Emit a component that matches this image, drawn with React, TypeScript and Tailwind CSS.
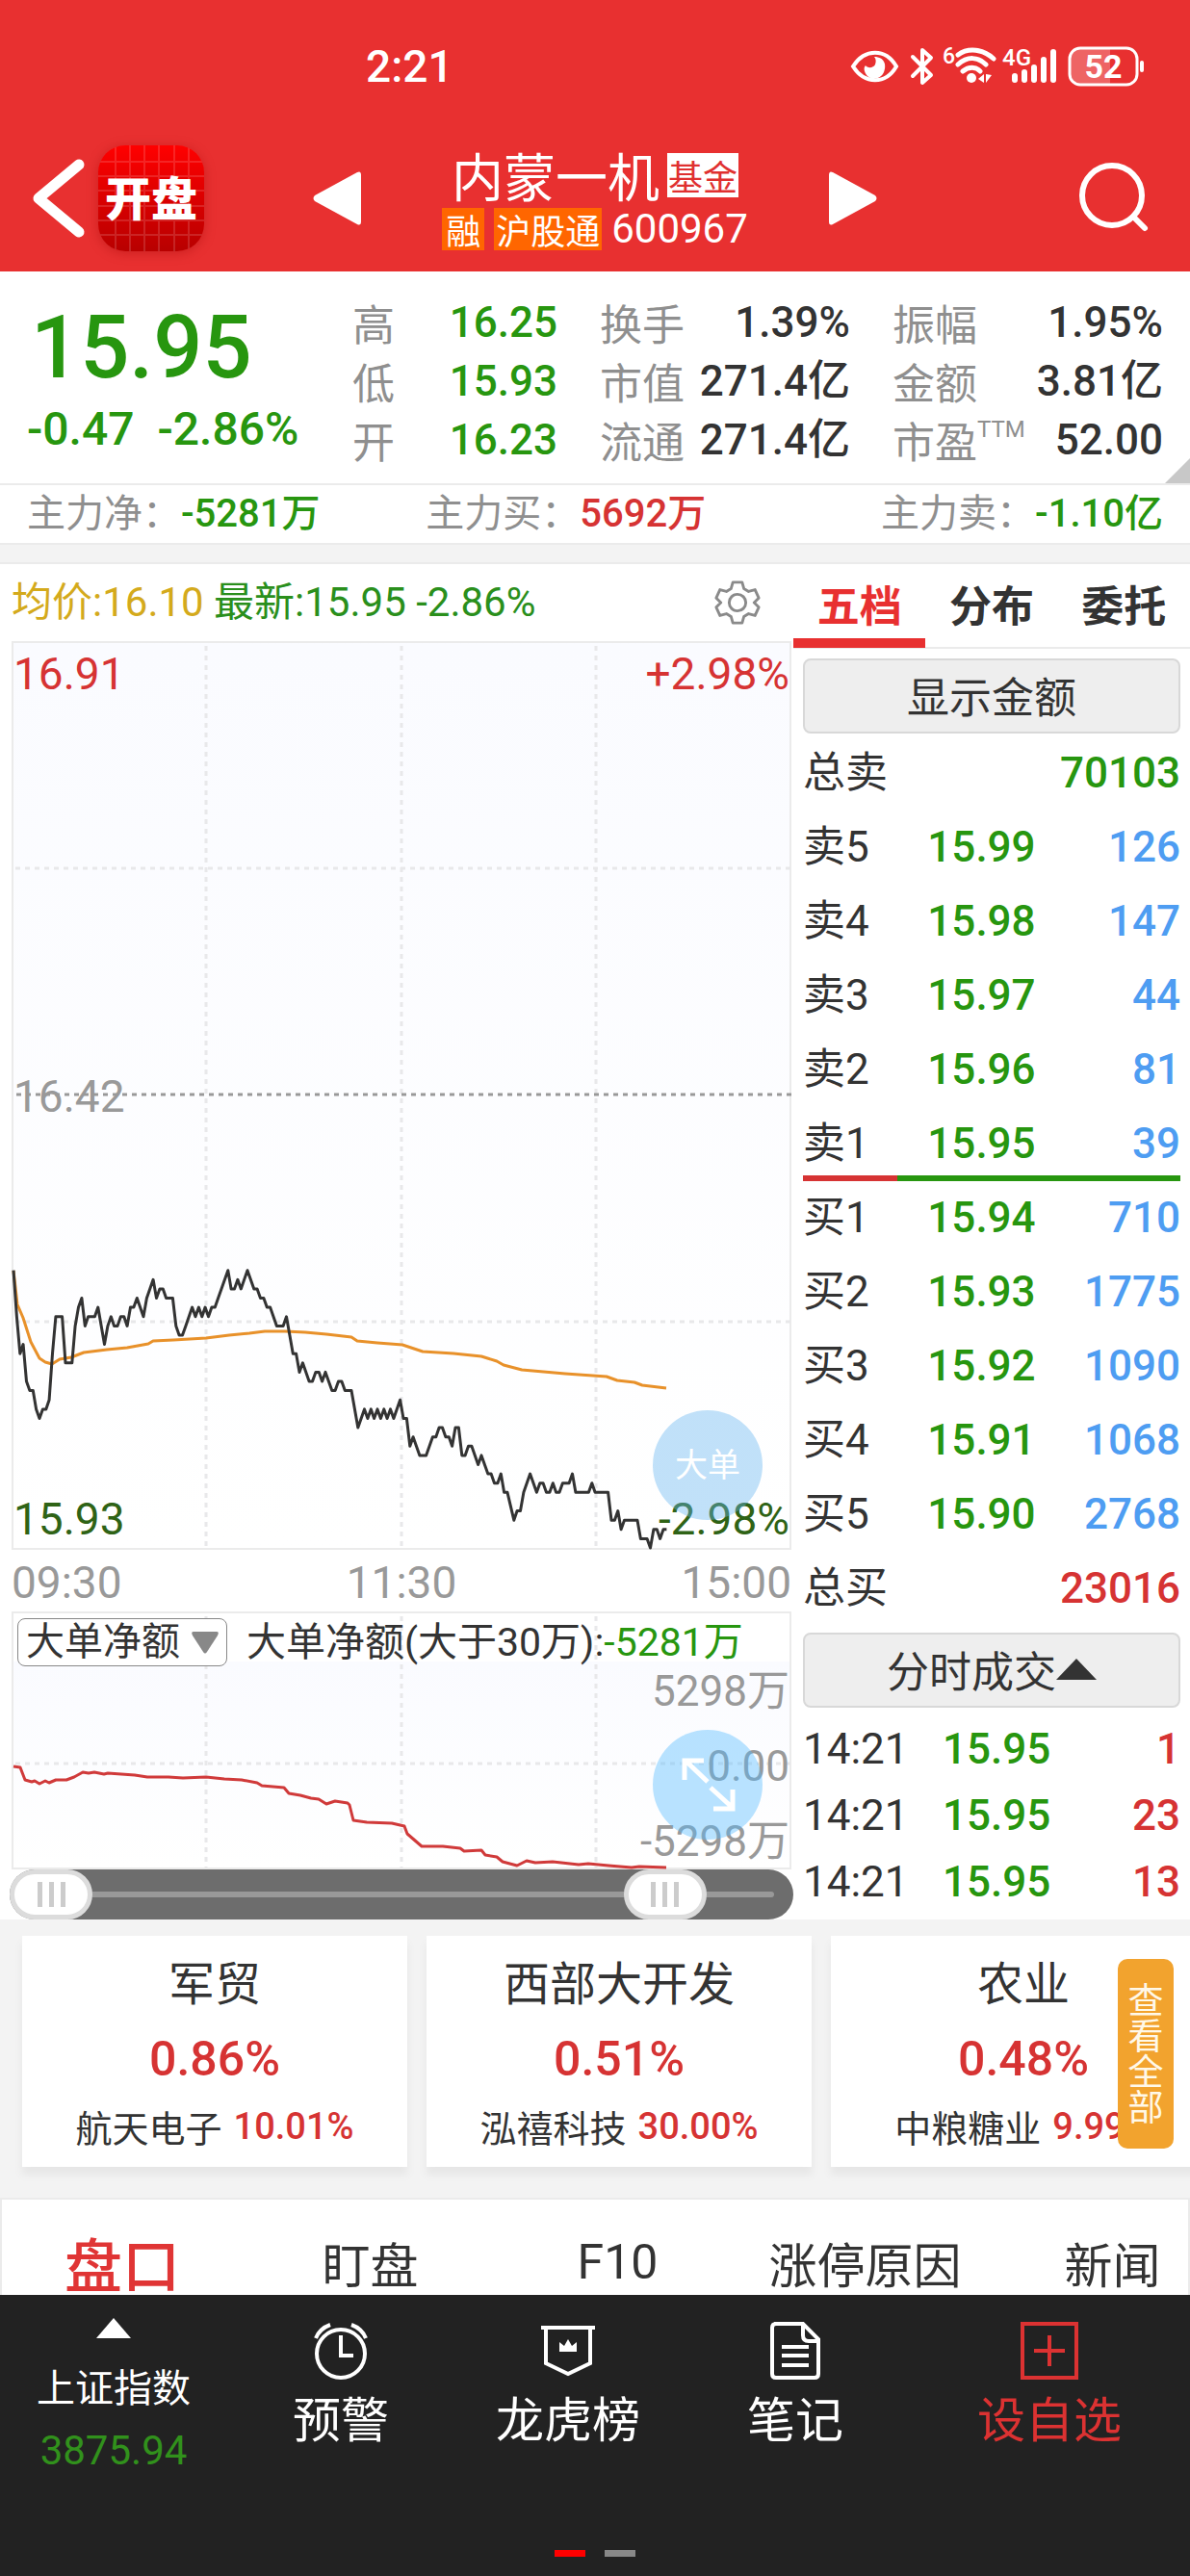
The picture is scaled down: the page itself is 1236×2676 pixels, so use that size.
import { useState, type ReactNode } from 'react';

const NUM = "font-['Roboto','Noto_Sans_CJK_SC',sans-serif]";

// [minute since open, price in cents above 15.90]
const PRICE: [number, number][] = [
  [0, 33], [1, 28], [2, 24], [3, 25], [4, 21], [5, 20], [6, 20], [7, 18], [8, 17], [9, 18], [10, 18], [11, 19], [12, 24],
  [13, 28], [15, 28], [16, 23], [18, 23], [19, 27], [20, 29], [21, 30], [22, 27], [23, 28], [25, 28], [26, 29], [28, 25],
  [29, 27], [30, 28], [31, 27], [32, 27], [33, 28], [34, 28], [35, 27], [36, 29], [37, 29], [38, 30], [40, 28], [41, 30],
  [43, 32], [44, 30], [45, 31], [46, 31], [47, 30], [49, 30], [50, 27], [51, 26], [52, 26], [53, 27], [55, 29], [56, 28],
  [57, 29], [58, 28], [59, 29], [60, 28], [61, 29], [62, 29], [63, 30], [66, 33], [67, 31], [68, 31], [69, 32], [70, 31],
  [72, 33], [74, 31], [75, 31], [76, 30], [77, 30], [78, 29], [79, 29], [81, 27], [83, 27], [84, 28], [85, 26], [86, 24],
  [87, 24], [88, 22], [89, 23], [91, 21], [92, 21], [93, 22], [94, 22], [95, 21], [96, 22], [98, 20], [99, 20], [100, 21],
  [101, 21], [102, 20], [104, 20], [106, 16], [108, 18], [109, 17], [110, 18], [111, 17], [112, 18], [113, 17], [114, 18],
  [115, 17], [116, 18], [117, 17], [119, 19], [120, 17], [121, 17], [122, 14], [123, 15], [125, 13], [127, 13], [129, 15],
  [130, 15], [131, 16], [132, 16], [133, 15], [134, 15], [135, 14], [136, 16], [137, 16], [138, 13], [139, 13], [140, 14],
  [141, 14], [143, 12], [144, 13], [146, 11], [147, 11], [148, 10], [149, 10], [150, 11], [151, 9], [152, 9], [154, 6],
  [155, 7], [156, 7], [157, 9], [159, 11], [161, 9], [162, 10], [163, 10], [164, 9], [165, 9], [166, 10], [167, 9],
  [168, 9], [169, 10], [171, 10], [172, 11], [173, 9], [177, 9], [178, 10], [179, 9], [183, 9], [184, 6], [185, 6],
  [186, 7], [187, 5], [188, 6], [192, 6], [193, 4], [195, 4], [196, 3], [197, 5], [198, 5], [199, 4], [200, 5], [201, 5],
];

const AVERAGE =
  '2,654 6,689 12,703 20,728 29,745 35,749 42,751 50,746 62,744 75,739 99,736 120,734 142,730 147,727 168,726 202,724 226,721 247,719 263,717 284,717 305,718 327,720 353,723 359,727 380,729 406,731 427,738 459,740 488,743 504,748 511,752 530,757 575,761 618,764 629,768 647,770 655,773 680,776';

const NET_FLOW =
  '2,161 9,162 14,175 21,177 24,176 29,179 35,176 39,178 46,175 57,175 65,172 74,167 80,168 86,167 96,169 100,168 128,170 141,172 163,172 178,173 202,172 221,174 239,175 255,178 260,181 283,183 288,189 300,191 311,194 319,195 327,200 336,197 349,199 351,201 355,217 369,219 395,220 408,223 411,231 426,244 448,244 466,246 470,249 488,248 492,253 504,255 510,260 525,264 535,259 544,261 562,260 589,263 599,262 620,264 644,266 652,265 680,266';

const pricePoints = PRICE.map(([m, c]) => `${(2 + m * 3.375).toFixed(1)},${(942 - (c - 3) * 9.61).toFixed(1)}`).join(' ');

const STATS = [
  [
    { label: '高', value: '16.25' },
    { label: '低', value: '15.93' },
    { label: '开', value: '16.23' },
  ],
  [
    { label: '换手', value: '1.39%' },
    { label: '市值', value: '271.4亿' },
    { label: '流通', value: '271.4亿' },
  ],
  [
    { label: '振幅', value: '1.95%' },
    { label: '金额', value: '3.81亿' },
    { label: '市盈', sup: 'TTM', value: '52.00' },
  ],
];

const ASKS = [
  ['卖5', '15.99', '126'],
  ['卖4', '15.98', '147'],
  ['卖3', '15.97', '44'],
  ['卖2', '15.96', '81'],
  ['卖1', '15.95', '39'],
];

const BIDS = [
  ['买1', '15.94', '710'],
  ['买2', '15.93', '1775'],
  ['买3', '15.92', '1090'],
  ['买4', '15.91', '1068'],
  ['买5', '15.90', '2768'],
];

const TRADES = [
  ['14:21', '15.95', '1'],
  ['14:21', '15.95', '23'],
  ['14:21', '15.95', '13'],
];

const SECTORS = [
  { name: '军贸', change: '0.86%', stock: '航天电子', stockChange: '10.01%' },
  { name: '西部大开发', change: '0.51%', stock: '泓禧科技', stockChange: '30.00%' },
  { name: '农业', change: '0.48%', stock: '中粮糖业', stockChange: '9.99%' },
];

function StatusBar() {
  return (
    <div className="flex h-[138px] items-center justify-between pr-12 pl-[380px] text-white">
      <span className={`${NUM} text-[46px] leading-none font-medium`}>2:21</span>
      <svg className="overflow-visible" width="304" height="42" viewBox="0 0 304 42" fill="none" stroke="white" aria-hidden="true">
        <path d="M2 21C14 2 36 2 47 21C36 40 14 40 2 21Z" strokeWidth="4" />
        <path d="M24 11C35 11 37 20 34 27C30 36 17 36 14 26C13 23 14 21 15 20C17 23 23 23 25 19C26 16 26 13 24 11Z" fill="white" stroke="none" />
        <path d="M64 11L83 30L74 38V4L83 12L64 31" strokeWidth="4" strokeLinejoin="round" strokeLinecap="round" />
        <text x="95" y="18" fontSize="23" fontWeight="500" fill="white" stroke="none" fontFamily="Roboto">6</text>
        <path d="M111 9C122 1 137 3 148 13M111 19C121 10 132 11 140 19M116 26C122 21 130 21 134 26" strokeWidth="5" strokeLinecap="round" />
        <circle cx="125" cy="33" r="5" fill="white" stroke="none" />
        <path d="M132 34L138 29V38ZM140 29V38L146 30" fill="white" stroke="none" />
        <text x="157" y="20" fontSize="24" fontWeight="500" fill="white" stroke="none" fontFamily="Roboto">4G</text>
        <path d="M170 31V35M180 27V35M190 22V35M200 14V35M210 6V35" strokeWidth="6" strokeLinecap="round" />
        <rect x="227" y="2" width="70" height="38" rx="11" strokeWidth="3" />
        <path d="M237 3H269V39H237Q228 38 228 30V12Q228 4 237 3Z" fill="white" fillOpacity="0.25" stroke="none" />
        <path d="M302 17V25" strokeWidth="4" strokeLinecap="round" />
        <text x="262" y="33" fontSize="34" fontWeight="700" textAnchor="middle" fill="white" stroke="none" fontFamily="Roboto">52</text>
      </svg>
    </div>
  );
}

function AppIcon() {
  return (
    <span className="relative flex size-[110px] items-center justify-center overflow-hidden rounded-[28px] bg-linear-to-b from-[#ff0000] to-[#b80000] pb-1.5 shadow-[0_2px_12px_rgba(150,0,0,0.35)]">
      <svg className="absolute inset-0" width="110" height="110" viewBox="0 0 110 110" stroke="white" strokeOpacity="0.14" strokeWidth="2" aria-hidden="true">
        <path d="M0 17H110M0 32H110M0 47H110M0 63H110M0 78H110M0 93H110M18 0V110M33 0V110M48 0V110M63 0V110M79 0V110M94 0V110" />
      </svg>
      <span className="relative text-[48px] leading-none font-black text-white">开盘</span>
    </span>
  );
}

function Header() {
  return (
    <header className="flex h-[144px] items-center justify-between pr-10 pb-2 pl-8 text-white">
      <div className="flex items-center gap-3">
        <button type="button" aria-label="返回">
          <svg width="58" height="88" viewBox="0 0 58 88" fill="none" stroke="white" strokeWidth="11" strokeLinecap="round" strokeLinejoin="round">
            <path d="M50 9L8 44L50 79" />
          </svg>
        </button>
        <AppIcon />
      </div>
      <div className="flex items-center">
        <button type="button" aria-label="上一只">
          <svg width="52" height="58" viewBox="0 0 52 58" fill="white">
            <path d="M47 2Q51 0 51 5V53Q51 58 47 56L3 32Q0 29 3 26Z" />
          </svg>
        </button>
        <div className="flex w-[484px] flex-col items-center gap-1">
          <h1 className="flex items-center gap-2 text-[54px] leading-[60px]">
            内蒙一机
            <span className="bg-white px-px text-[36px] leading-[46px] text-[#e03030]">基金</span>
          </h1>
          <p className="flex items-center gap-2.5 text-[36px] leading-[44px]">
            <span className="bg-[#ff6600] px-1">融</span>
            <span className="bg-[#ff6600] px-0.5">沪股通</span>
            <span className={`${NUM} text-[42px]`}>600967</span>
          </p>
        </div>
        <button type="button" aria-label="下一只">
          <svg width="52" height="58" viewBox="0 0 52 58" fill="white">
            <path d="M5 2Q1 0 1 5V53Q1 58 5 56L49 32Q52 29 49 26Z" />
          </svg>
        </button>
      </div>
      <button type="button" aria-label="搜索" className="ml-24">
        <svg width="76" height="76" viewBox="0 0 76 76" fill="none" stroke="white" strokeWidth="6" strokeLinecap="round">
          <circle cx="35" cy="35" r="31" />
          <path d="M57 57L69 69" />
        </svg>
      </button>
    </header>
  );
}

function Quote() {
  return (
    <section className="relative flex h-[222px] border-b-2 border-[#ebebeb] bg-white pt-[22px] pr-7">
      <div className={`${NUM} w-[366px] pl-7 font-medium text-[#27960f]`}>
        <p className="pt-3 pl-1 text-[90px] leading-[92px]">15.95</p>
        <p className="mt-3 flex gap-6 text-[48px] leading-[52px]">
          <span>-0.47</span>
          <span>-2.86%</span>
        </p>
      </div>
      <div className="grid flex-1 grid-cols-[213fr_260fr_281fr] gap-11">
        {STATS.map((col, i) => (
          <dl key={i}>
            {col.map(({ label, value, ...rest }) => (
              <div key={label} className="flex h-[61px] items-center justify-between text-[44px] leading-[60px] whitespace-nowrap">
                <dt className="flex text-[#8f8f8f]">
                  {label}
                  {'sup' in rest && <sup className={`${NUM} top-0 text-[24px] leading-[38px]`}>{rest.sup as string}</sup>}
                </dt>
                <dd className={i === 0 ? `${NUM} font-medium text-[#27960f]` : `${NUM} font-medium text-[#333]`}>{value}</dd>
              </div>
            ))}
          </dl>
        ))}
      </div>
      <svg className="absolute right-0 bottom-0" width="26" height="26" fill="#c8c8c8" aria-hidden="true">
        <path d="M26 0V26H0Z" />
      </svg>
    </section>
  );
}

function MainFlow() {
  return (
    <section className="flex h-[60px] items-center justify-between bg-white pr-7 pb-1 pl-7 text-[40px] leading-none text-[#8f8f8f]">
      <p>主力净：<span className={`${NUM} font-medium text-[#27960f]`}>-5281万</span></p>
      <p>主力买：<span className={`${NUM} font-medium text-[#d63333]`}>5692万</span></p>
      <p className="pl-[72px]">主力卖：<span className={`${NUM} font-medium text-[#27960f]`}>-1.10亿</span></p>
    </section>
  );
}

function PriceChart() {
  return (
    <div className={`${NUM} relative h-[944px] border-2 border-[#ebebeb] bg-linear-to-b from-[#fafbff] to-white text-[46px] leading-[60px]`}>
      <svg className="absolute -inset-0.5 h-[944px] w-[calc(100%+4px)] overflow-visible" viewBox="0 0 810 944" preserveAspectRatio="none" fill="none">
        <path d="M202 5V942M405 5V942M607 5V942" stroke="#e8e8ea" strokeWidth="3" strokeDasharray="5 5" />
        <path d="M4 236H810M4 707H810" stroke="#e8e8ea" strokeWidth="3" strokeDasharray="5 5" />
        <path d="M5 471H810" stroke="#999" strokeWidth="3" strokeDasharray="5 5" />
        <polyline points={AVERAGE} stroke="#e8912a" strokeWidth="3" strokeLinejoin="round" />
        <polyline points={pricePoints} stroke="#333" strokeWidth="3" strokeLinejoin="round" />
      </svg>
      <div className="relative flex h-full flex-col justify-between pt-0.5">
        <p className="flex justify-between text-[#d63333]">
          <span>16.91</span>
          <span>+2.98%</span>
        </p>
        <p className="text-[#999]">16.42</p>
        <p className="flex justify-between text-[#2f6316]">
          <span>15.93</span>
          <span>-2.98%</span>
        </p>
      </div>
      <button
        type="button"
        className="absolute right-7 bottom-[29px] size-[114px] rounded-full bg-[#64b4f0]/40 text-[34px] leading-none text-white"
      >
        大单
      </button>
    </div>
  );
}

function FlowChart() {
  return (
    <div className={`${NUM} relative h-[268px] border-2 border-[#ebebeb] text-[44px] leading-[60px]`}>
      <div className="absolute inset-x-0 top-[50px] bottom-0 bg-linear-to-b from-[#fafbff] to-white" />
      <svg className="absolute -inset-0.5 h-[268px] w-[calc(100%+4px)] overflow-visible" viewBox="0 0 810 268" preserveAspectRatio="none" fill="none">
        <path d="M202 5V266M405 5V266M607 5V266" stroke="#e8e8ea" strokeWidth="3" strokeDasharray="5 5" />
        <path d="M4 158H810" stroke="#e8e8ea" strokeWidth="3" strokeDasharray="5 5" />
      </svg>
      <div className="relative flex items-center gap-5 pt-1 pl-1 text-[41px] leading-[52px] whitespace-nowrap text-[#333]">
        <span className="relative">
          <select aria-label="指标" className="block h-[50px] w-[218px] appearance-none rounded-lg border border-[#888] bg-white pl-2 text-[40px] leading-[48px]">
            <option>大单净额</option>
          </select>
          <svg className="pointer-events-none absolute top-[14px] right-2" width="30" height="24" fill="#888" aria-hidden="true">
            <path d="M3 0H27Q30 0 28 4L17 21Q15 24 13 21L2 4Q0 0 3 0Z" />
          </svg>
        </span>
        <span>
          大单净额(大于30万):<span className="text-[#27960f]">-5281万</span>
        </span>
      </div>
      <div className="absolute top-[51px] right-0 flex flex-col gap-[18px] text-right text-[#999]">
        <span>5298万</span>
        <span>0.00</span>
        <span>-5298万</span>
      </div>
      <svg className="absolute -inset-0.5 h-[268px] w-[calc(100%+4px)] overflow-visible" viewBox="0 0 810 268" preserveAspectRatio="none" fill="none">
        <polyline points={NET_FLOW} stroke="#d03a3a" strokeWidth="3" strokeLinejoin="round" />
      </svg>
      <button
        type="button"
        aria-label="全屏"
        className="absolute right-7 bottom-[29px] flex size-[114px] items-center justify-center rounded-full bg-[#50b9ff]/40"
      >
        <svg width="60" height="60" viewBox="0 0 60 60" fill="none" stroke="white" strokeWidth="5">
          <path d="M30 27L7 5M6 25V5H26M33 33L56 54M56 35V55H36" />
        </svg>
      </button>
    </div>
  );
}

const THUMB =
  'pointer-events-none absolute inset-0 m-0 size-full appearance-none bg-transparent [&::-webkit-slider-thumb]:pointer-events-auto [&::-webkit-slider-thumb]:h-[52px] [&::-webkit-slider-thumb]:w-[86px] [&::-webkit-slider-thumb]:appearance-none [&::-webkit-slider-thumb]:rounded-[26px] [&::-webkit-slider-thumb]:border-5 [&::-webkit-slider-thumb]:border-[#dcdcdc] [&::-webkit-slider-thumb]:bg-white [&::-webkit-slider-thumb]:bg-[linear-gradient(90deg,#ccc_0_5px,transparent_5px_12px,#ccc_12px_17px,transparent_17px_24px,#ccc_24px_29px)] [&::-webkit-slider-thumb]:bg-size-[29px_26px] [&::-webkit-slider-thumb]:bg-center [&::-webkit-slider-thumb]:bg-no-repeat';

function RangeBar() {
  const [from, setFrom] = useState(0);
  const [to, setTo] = useState(876);
  return (
    <div className="relative -mr-0.5 -ml-0.5 flex h-[52px] items-center rounded-[26px] bg-[#6d6d6d] px-5">
      <div className="h-1.5 flex-1 rounded-full bg-[#999]" />
      <input type="range" aria-label="开始时间" max={1000} value={from} onChange={(e) => setFrom(+e.target.value)} className={THUMB} />
      <input type="range" aria-label="结束时间" max={1000} value={to} onChange={(e) => setTo(+e.target.value)} className={THUMB} />
    </div>
  );
}

function ChartPanel() {
  return (
    <div className="min-w-0 flex-1 pr-0.5 pl-3">
      <div className={`${NUM} flex h-20 items-center justify-between pr-8 text-[42px] leading-none`}>
        <p>
          <span className="text-[#d4aa1c]">均价:16.10</span> <span className="text-[#2a8f1c]">最新:15.95 -2.86%</span>
        </p>
        <button type="button" aria-label="设置">
          <svg width="48" height="50" viewBox="0 0 50 50" fill="none" stroke="#8a8a8a" strokeWidth="3" strokeLinejoin="round">
            <path d="M20 3H30L32 10L37 13L44 11L48 20L43 25L48 30L44 39L37 37L32 40L30 47H20L18 40L13 37L6 39L2 30L7 25L2 20L6 11L13 13L18 10Z" />
            <circle cx="25" cy="25" r="9" />
          </svg>
        </button>
      </div>
      <PriceChart />
      <div className={`${NUM} flex h-16 items-center justify-between pt-1 text-[46px] leading-none text-[#999]`}>
        <span>09:30</span>
        <span>11:30</span>
        <span>15:00</span>
      </div>
      <FlowChart />
      <RangeBar />
    </div>
  );
}

function BookRow({ row }: { row: string[] }) {
  return (
    <tr className="h-[77px]">
      <th scope="row" className="pt-1 text-left font-normal">{row[0]}</th>
      <td className="w-[34%] pt-1 font-medium text-[#27960f]">{row[1]}</td>
      <td className="pt-1 text-right font-medium text-[#4e9df2]">{row[2]}</td>
    </tr>
  );
}

function PanelButton({ children }: { children: ReactNode }) {
  return (
    <button type="button" className="flex h-[78px] w-full items-center justify-center rounded-lg border-2 border-[#d8d8d8] bg-[#eee] pb-0.5 text-[44px] leading-none">
      {children}
    </button>
  );
}

function OrderBook() {
  const table = `${NUM} w-full table-fixed text-[44px] leading-none`;
  return (
    <div className="w-[412px] shrink-0 text-[#333]">
      <div role="tablist" className="flex h-[88px] border-b-2 border-[#ebebeb] text-[44px] leading-[82px] font-bold">
        <button type="button" role="tab" aria-selected="true" className="h-[87px] flex-1 border-b-10 border-[#e83030] text-[#e83030]">五档</button>
        <button type="button" role="tab" aria-selected="false" className="h-[87px] flex-1 border-b-10 border-transparent">分布</button>
        <button type="button" role="tab" aria-selected="false" className="h-[87px] flex-1 border-b-10 border-transparent">委托</button>
      </div>
      <div className="px-2.5 pt-2.5">
        <PanelButton>显示金额</PanelButton>
        <table className={table}>
          <tbody>
            <tr className="h-[77px]">
              <th scope="row" className="pt-1 text-left font-normal">总卖</th>
              <td className="w-[34%]" />
              <td className="pt-1 text-right font-medium text-[#27960f]">70103</td>
            </tr>
            {ASKS.map((row) => <BookRow key={row[0]} row={row} />)}
          </tbody>
        </table>
        <div className="relative -my-1 flex h-2 py-px">
          <div className="w-1/4 bg-[#d63333]" />
          <div className="flex-1 bg-[#27960f]" />
        </div>
        <table className={table}>
          <tbody>
            {BIDS.map((row) => <BookRow key={row[0]} row={row} />)}
            <tr className="h-[77px]">
              <th scope="row" className="pt-1 text-left font-normal">总买</th>
              <td className="w-[34%]" />
              <td className="pt-1 text-right font-medium text-[#d63333]">23016</td>
            </tr>
          </tbody>
        </table>
        <div className="pt-2.5 pb-1.5">
          <PanelButton>
            分时成交
            <svg width="42" height="22" fill="#333" aria-hidden="true">
              <path d="M21 0L42 22H0Z" />
            </svg>
          </PanelButton>
        </div>
        <table className={table}>
          <tbody>
            {TRADES.map((row, i) => (
              <tr key={i} className="h-[69px]">
                <td className="w-[37%] pt-1">{row[0]}</td>
                <td className="pt-1 font-medium text-[#27960f]">{row[1]}</td>
                <td className="w-[26%] pt-1 text-right font-medium text-[#d63333]">{row[2]}</td>
              </tr>
            ))}
          </tbody>
        </table>
      </div>
    </div>
  );
}

function Sectors() {
  return (
    <section className="relative overflow-hidden bg-[#f3f3f3] pt-[17px] pb-8 pl-[23px]">
      <div className="flex gap-5">
        {SECTORS.map((s) => (
          <a key={s.name} href="#" className="flex h-[240px] w-[400px] shrink-0 flex-col items-center bg-white pt-4 whitespace-nowrap text-[#333] shadow-[0_8px_8px_#e6e6e6]">
            <span className="text-[48px] leading-[60px]">{s.name}</span>
            <span className={`${NUM} pt-3.5 text-[50px] leading-[76px] font-medium text-[#d63333]`}>{s.change}</span>
            <span className="flex gap-3 text-[38px] leading-[64px]">
              {s.stock}
              <span className={`${NUM} font-medium text-[#d63333]`}>{s.stockChange}</span>
            </span>
          </a>
        ))}
      </div>
      <button type="button" className="absolute top-[41px] right-[17px] w-[58px] rounded-[10px] bg-[#f2a32e] px-2.5 pt-[23px] pb-[26px] text-[37px] leading-[37px] text-[#fff8e8]">
        查看全部
      </button>
    </section>
  );
}

function InfoTabs() {
  const tab = 'w-[257px] shrink-0 text-[50px]';
  return (
    <div role="tablist" className="flex h-[101px] overflow-hidden border-2 border-b-0 border-[#ebebeb] bg-white pt-[30px] leading-[68px] text-[#333]">
      <button type="button" role="tab" aria-selected="true" className="w-[254px] shrink-0 pr-1 text-[60px] font-medium text-[#e03535]">盘口</button>
      <button type="button" role="tab" aria-selected="false" className={tab}>盯盘</button>
      <button type="button" role="tab" aria-selected="false" className={`${tab} ${NUM}`}>F10</button>
      <button type="button" role="tab" aria-selected="false" className={tab}>涨停原因</button>
      <button type="button" role="tab" aria-selected="false" className={tab}>新闻</button>
    </div>
  );
}

function NavItem({ label, children }: { label: string; children: ReactNode }) {
  return (
    <a href="#" className="flex w-[236px] flex-col items-center gap-2 pt-7">
      <svg width="60" height="60" viewBox="0 0 60 60" fill="none" stroke="white" strokeWidth="4" aria-hidden="true">
        {children}
      </svg>
      <span className="text-[50px] leading-[60px]">{label}</span>
    </a>
  );
}

function BottomNav() {
  return (
    <nav className="bg-[#222] pb-5 text-white">
      <div className="flex h-[261px]">
        <a href="#" className="flex w-[236px] flex-col items-center pt-6">
          <svg width="36" height="21" fill="white" aria-hidden="true">
            <path d="M18 0L36 21H0Z" />
          </svg>
          <span className="pt-[18px] text-[40px] leading-[62px]">上证指数</span>
          <span className={`${NUM} pt-1.5 text-[42px] leading-[62px] text-[#31911c]`}>3875.94</span>
        </a>
        <NavItem label="预警">
          <circle cx="30" cy="33" r="25" />
          <path d="M30 14V35H43" />
          <path d="M4 17Q8 7 19 3M56 17Q52 7 41 3" />
        </NavItem>
        <NavItem label="龙虎榜">
          <path d="M2 6H58" />
          <path d="M7 8V43L30 54L53 43V8" />
          <path d="M21 31V21L26 25L30 18L34 25L39 21V31Z" fill="white" stroke="none" />
        </NavItem>
        <NavItem label="笔记">
          <path d="M8 2H38L54 18V54Q54 58 50 58H10Q6 58 6 54V6Q6 2 10 2M38 2V14Q38 20 44 20H54M16 26H44M16 35H44M16 45H44" />
        </NavItem>
        <a href="#" className="flex flex-1 flex-col items-center gap-2 pt-7 text-[#dc3232]">
          <svg width="60" height="60" viewBox="0 0 60 60" fill="none" stroke="#dc3232" strokeWidth="4" aria-hidden="true">
            <path d="M2 2H58V58H2ZM30 14V46M14 30H46" />
          </svg>
          <span className="text-[50px] leading-[60px]">设自选</span>
        </a>
      </div>
      <div className="flex justify-center gap-5 pt-1">
        <span className="h-[7px] w-8 bg-[#ff0000]" />
        <span className="h-[7px] w-8 bg-[#888]" />
      </div>
    </nav>
  );
}

export default function App() {
  return (
    <div className="bg-[#f3f3f3] font-['Noto_Sans_CJK_SC',sans-serif]">
      <div className="bg-[#e83030]">
        <StatusBar />
        <Header />
      </div>
      <Quote />
      <MainFlow />
      <div className="h-[22px] border-y-2 border-[#ebebeb] bg-[#f3f3f3]" />
      <main className="flex bg-white">
        <ChartPanel />
        <OrderBook />
      </main>
      <Sectors />
      <InfoTabs />
      <BottomNav />
    </div>
  );
}
